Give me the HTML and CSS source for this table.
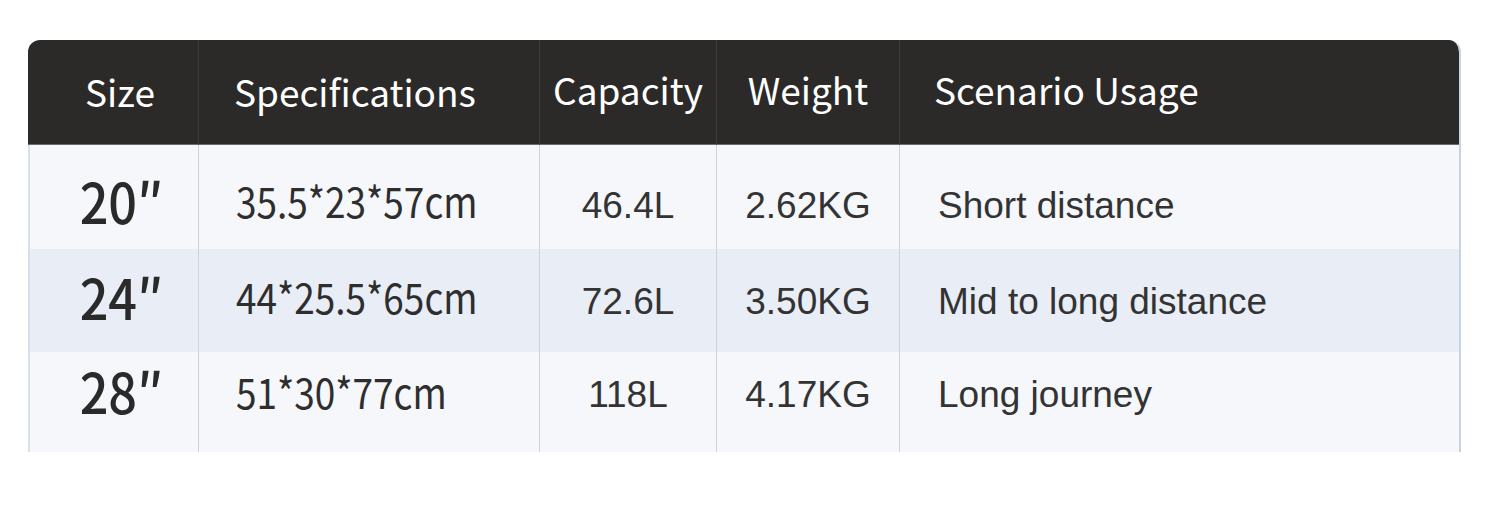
FILE: index.html
```html
<!DOCTYPE html>
<html>
<head>
<meta charset="utf-8">
<link rel="stylesheet" href="styles.css">
</head>
<body>
<div class="page">
  <div class="table">
    <div class="cell head c-size">Size</div>
    <div class="cell head c-spec">Specifications</div>
    <div class="cell head c-cap">Capacity</div>
    <div class="cell head c-wt">Weight</div>
    <div class="cell head c-use">Scenario Usage</div>

    <div class="cell r1 c-size"><span class="size">20″</span></div>
    <div class="cell r1 c-spec"><span class="spec">35.5*23*57cm</span></div>
    <div class="cell r1 c-cap"><span class="val">46.4L</span></div>
    <div class="cell r1 c-wt"><span class="val">2.62KG</span></div>
    <div class="cell r1 c-use"><span class="val">Short distance</span></div>

    <div class="cell r2 c-size"><span class="size">24″</span></div>
    <div class="cell r2 c-spec"><span class="spec">44*25.5*65cm</span></div>
    <div class="cell r2 c-cap"><span class="val">72.6L</span></div>
    <div class="cell r2 c-wt"><span class="val">3.50KG</span></div>
    <div class="cell r2 c-use"><span class="val">Mid to long distance</span></div>

    <div class="cell r3 c-size"><span class="size">28″</span></div>
    <div class="cell r3 c-spec"><span class="spec">51*30*77cm</span></div>
    <div class="cell r3 c-cap"><span class="val">118L</span></div>
    <div class="cell r3 c-wt"><span class="val">4.17KG</span></div>
    <div class="cell r3 c-use"><span class="val">Long journey</span></div>
  </div>
</div>
</body>
</html>
```
FILE: styles.css
```css
html, body {
  margin: 0;
  padding: 0;
  background: #ffffff;
}
.page {
  padding: 40px 0 0 28px;
}
.table {
  width: 1433px;
  display: grid;
  grid-template-columns: 170px 341px 177px 183px 562px;
  grid-template-rows: 105px 104px 103px 100px;
  border-radius: 12px 12px 0 0;
  overflow: hidden;
  border-right: 2px solid #c4d4e1;
  box-sizing: border-box;
}
.cell {
  display: flex;
  align-items: center;
  box-sizing: border-box;
  border-left: 1px solid #cfd3d9;
  color: #2e2e2e;
}
.c-size { justify-content: center; border-left: 2px solid #d7dfe9; }
.c-cap, .c-wt { justify-content: center; }
.c-spec, .c-use { justify-content: flex-start; }

.head {
  background: #2b2a28;
  color: #ffffff;
  font-family: "Noto Sans CJK SC", "Noto Sans", sans-serif;
  font-size: 37px;
  border-left: 1px solid #3d3c3a;
  border-bottom: 1px solid #6b6b6b;
  padding-bottom: 6px;
}
.head.c-size { border-left: none; padding-left: 14px; padding-bottom: 2px; }
.head.c-spec { padding-left: 35px; padding-bottom: 2px; }
.head.c-use { padding-left: 34px; }

.r1, .r3 { background: #f5f7fb; }
.r2 { background: #e9edf6; }

.cell.c-spec:not(.head) { padding-left: 37px; }
.cell.c-use:not(.head) { padding-left: 38px; }
.cell.c-size:not(.head) { padding-left: 14px; }

.size {
  display: inline-block;
  font-family: "Noto Sans CJK SC", sans-serif;
  font-weight: 500;
  font-size: 56px;
  color: #2a2a2a;
  transform: scaleX(0.9);
  margin-top: 4px;
}
.spec {
  display: inline-block;
  font-family: "Noto Sans CJK SC", sans-serif;
  font-size: 42px;
  color: #2e2e2e;
  transform: scaleX(0.88);
  transform-origin: left center;
  margin-top: 4px;
}
.val {
  font-family: "Liberation Sans", Arial, sans-serif;
  font-size: 37px;
  color: #333333;
  margin-top: 18px;
}
.r2 .val { margin-top: 2px; }
.r2 .spec { margin-top: -10px; }
.r2 .size { margin-top: -10px; }
.r3 .val { margin-top: -14px; }
.r3 .spec { margin-top: -24px; }
.r3 .size { margin-top: -26px; }
```
